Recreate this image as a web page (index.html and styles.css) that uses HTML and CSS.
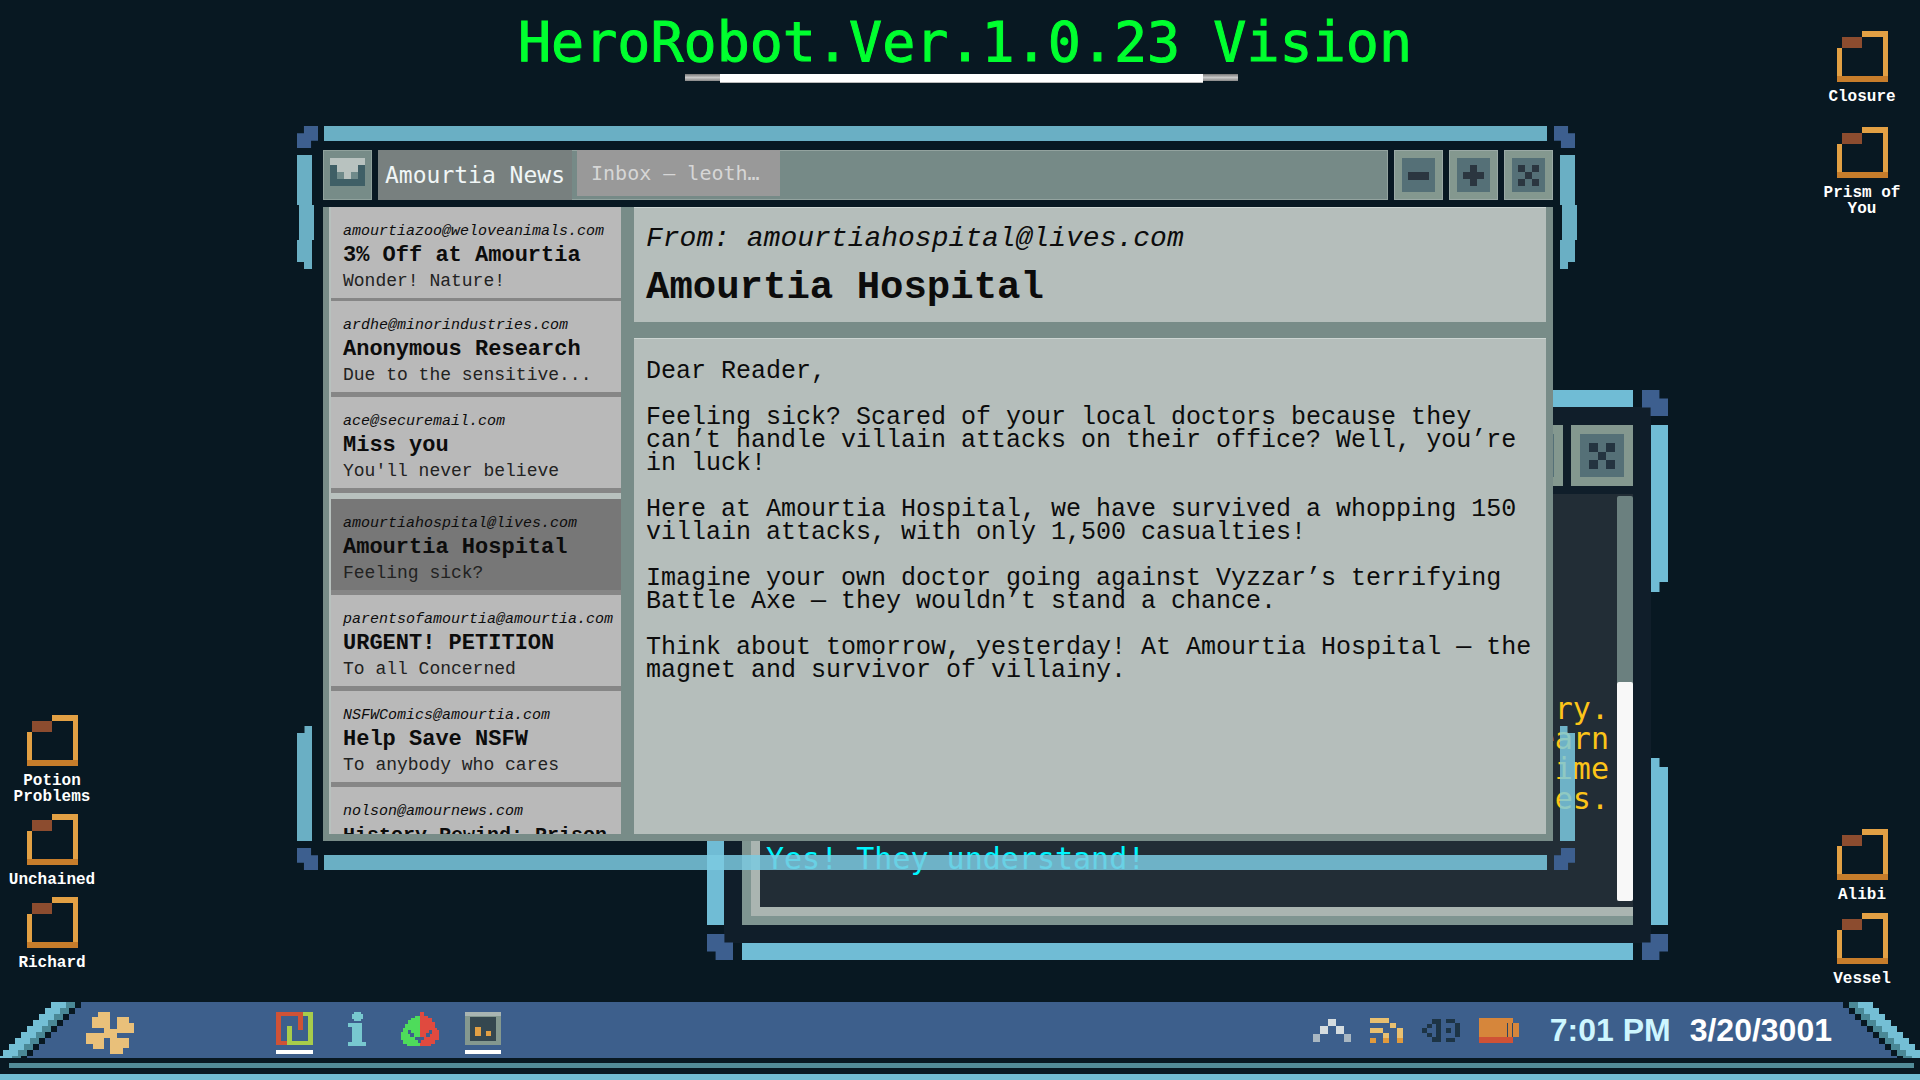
FILE: index.html
```html
<!DOCTYPE html>
<html lang="en">
<head>
  <meta charset="UTF-8" />
  <meta name="viewport" content="width=device-width, initial-scale=1.0"/>
  <title>HeroRobot Desktop</title>
  <link rel="stylesheet" href="styles.css">
</head>
<body>

  <svg class="defs" aria-hidden="true">
    <symbol id="folder" viewBox="0 0 51 51">
      <path fill="#e2a044" d="M25 0h26v51h-5V6H25zM0 17h5v34H0z"/>
      <path fill="#c77d2b" d="M0 45h51v6H0z"/>
      <path fill="#8c4c2f" d="M5 6h20v11H5z"/>
    </symbol>
    <symbol id="edge" viewBox="0 0 84 56">
      <path fill="#3d5f8c" d="M84 0v56H27v-2h6v-6h6v-6h6v-6h6v-6h6v-6h6v-6h6v-6h6v-6h6V0z"/>
      <path fill="#4a8896" d="M66 0h9v6h-6v6h-6v6h-6v6h-6v6h-6v6h-6v6h-6v6h-6v6h-6v2H12v-2h6v-6h6v-6h6v-6h6v-6h6v-6h6v-6h6v-6h6v-6h6z"/>
      <path fill="#74bfd5" d="M51 0h15v6h-6v6h-6v6h-6v6h-6v6h-6v6h-6v6h-6v6h-6v6h-6v2H-3v-2h6v-6h6v-6h6v-6h6v-6h6v-6h6v-6h6v-6h6v-6h6z"/>
    </symbol>
  </svg>

  <main class="desktop">
    <nav class="shortcuts left" aria-label="Shortcuts">
      <div class="group">
        <a class="shortcut" href="#"><svg><use href="#folder"/></svg>Potion Problems</a>
        <a class="shortcut" href="#"><svg><use href="#folder"/></svg>Unchained</a>
        <a class="shortcut" href="#"><svg><use href="#folder"/></svg>Richard</a>
      </div>
    </nav>

    <header>
      <h1>HeroRobot.Ver.1.0.23 Vision</h1>
      <div class="underline"></div>
    </header>

    <nav class="shortcuts right" aria-label="More shortcuts">
      <div class="group top">
        <a class="shortcut" href="#"><svg><use href="#folder"/></svg>Closure</a>
        <a class="shortcut" href="#"><svg><use href="#folder"/></svg>Prism of You</a>
      </div>
      <div class="group">
        <a class="shortcut" href="#"><svg><use href="#folder"/></svg>Alibi</a>
        <a class="shortcut" href="#"><svg><use href="#folder"/></svg>Vessel</a>
      </div>
    </nav>

    <section class="window chat" aria-label="Chat">
      <i class="corner up"></i><i class="bar"></i><i class="corner down end"></i>
      <div class="sides"><i class="side top"></i><i class="side bottom"></i></div>
      <div class="inner">
        <div class="titlebar">
          <button aria-label="Maximize"><svg viewBox="0 0 21 21"><path d="M7 0h7v7h7v7h-7v7H7v-7H0V7h7z"/></svg></button>
          <button aria-label="Close chat"><svg viewBox="0 0 21 21"><path d="M0 0h7v7H0zM14 0h7v7h-7zM7 7h7v7H7zM0 14h7v7H0zM14 14h7v7h-7z"/></svg></button>
        </div>
        <div class="log">
          <div class="messages">
            <p class="them">ary.<br>earn<br>time<br>ces.</p>
            <p class="me">Yes! They understand!</p>
          </div>
          <div class="scrollbar"><div class="thumb"></div></div>
        </div>
      </div>
      <div class="sides end"><i class="side top"></i><i class="side bottom"></i></div>
      <i class="corner down low"></i><i class="bar low"></i><i class="corner up end low"></i>
    </section>

    <section class="window mail" aria-label="Mail">
      <i class="corner up"></i><i class="bar"></i><i class="corner down end"></i>
      <div class="sides"><i class="side top"></i><i class="side bottom"></i></div>
      <div class="inner">
        <div class="titlebar">
          <div class="app-icon">
            <svg viewBox="0 0 35 28">
              <path fill="#3f5f66" d="M0 7h35v21H0z"/>
              <path fill="#6f8a8a" d="M7 14h21v7H7z"/>
              <path fill="#b8c2bf" d="M0 0h35v7h-7v7h-7v7h-7v-7H7V7H0z"/>
            </svg>
          </div>
          <div class="tabs">
            <button class="tab active">Amourtia News</button>
            <button class="tab">Inbox – leoth…</button>
          </div>
          <button class="control" aria-label="Minimize"><svg viewBox="0 0 21 21"><path d="M0 7h21v8H0z"/></svg></button>
          <button class="control" aria-label="Maximize mail"><svg viewBox="0 0 21 21"><path d="M7 0h7v7h7v7h-7v7H7v-7H0V7h7z"/></svg></button>
          <button class="control" aria-label="Close"><svg viewBox="0 0 21 21"><path d="M0 0h7v7H0zM14 0h7v7h-7zM7 7h7v7H7zM0 14h7v7H0zM14 14h7v7h-7z"/></svg></button>
        </div>

        <div class="mail-body">
          <div class="mail-list">
            <a class="mail-item" href="#"><em>amourtiazoo@weloveanimals.com</em><strong>3% Off at Amourtia</strong><span>Wonder! Nature!</span></a>
            <a class="mail-item" href="#"><em>ardhe@minorindustries.com</em><strong>Anonymous Research</strong><span>Due to the sensitive...</span></a>
            <a class="mail-item" href="#"><em>ace@securemail.com</em><strong>Miss you</strong><span>You'll never believe</span></a>
            <a class="mail-item selected" href="#"><em>amourtiahospital@lives.com</em><strong>Amourtia Hospital</strong><span>Feeling sick?</span></a>
            <a class="mail-item" href="#"><em>parentsofamourtia@amourtia.com</em><strong>URGENT! PETITION</strong><span>To all Concerned</span></a>
            <a class="mail-item" href="#"><em>NSFWComics@amourtia.com</em><strong>Help Save NSFW</strong><span>To anybody who cares</span></a>
            <a class="mail-item" href="#"><em>nolson@amournews.com</em><strong class="long">History Rewind: Prison</strong></a>
          </div>

          <article class="mail-detail">
            <div class="mail-header">
              <p>From: amourtiahospital@lives.com</p>
              <h2>Amourtia Hospital</h2>
            </div>
            <div class="mail-text">
              <p>Dear Reader,</p>
              <p>Feeling sick? Scared of your local doctors because they can’t handle villain attacks on their office? Well, you’re in luck!</p>
              <p>Here at Amourtia Hospital, we have survived a whopping 150 villain attacks, with only 1,500 casualties!</p>
              <p>Imagine your own doctor going against Vyzzar’s terrifying Battle Axe — they wouldn’t stand a chance.</p>
              <p>Think about tomorrow, yesterday! At Amourtia Hospital — the magnet and survivor of villainy.</p>
            </div>
          </article>
        </div>
      </div>
      <div class="sides end"><i class="side top"></i><i class="side bottom"></i></div>
      <i class="corner down low"></i><i class="bar low"></i><i class="corner up end low"></i>
    </section>
  </main>

  <footer class="taskbar">
    <div class="dock">
      <svg class="edge" viewBox="0 0 84 56"><use href="#edge"/></svg>
      <div class="dock-items">
        <button class="start" aria-label="Start">
          <svg width="48" height="42" viewBox="0 0 48 42"><path fill="#e9c07a" d="M12 0h12v17h7V5h12v6h5v10H31v5h12v10h-6v6H24V26h-6v11H7v-5H0V21h18v-5H6V5h6z"/></svg>
        </button>
        <div class="apps">
          <button class="open" aria-label="Maze">
            <svg width="37" height="33" viewBox="0 0 37 33"><path fill="#cf5236" d="M0 0h27v18h-5V4H5v25h6v4H0z"/><path fill="#a8cc4b" d="M27 0h10v33H11V14h5v15h16V4h-5z"/></svg>
          </button>
          <button aria-label="Info">
            <svg width="18" height="34" viewBox="0 0 18 34"><path fill="#78c8cf" d="M6 0h7v2h2v5h-2v2H6V7H4V2h2zM0 11h14v19h4v4H0v-4h4V15H0z"/></svg>
          </button>
          <button aria-label="Apple">
            <svg width="38" height="34" viewBox="0 0 38 34"><path fill="#4edc5b" d="M19 4h-5v2h-4v2H7v4H4v4H2v4H0v8h2v4h4v2h13z"/><path fill="#e04a3f" d="M19 0h4v4h4v2h4v4h3v6h2v2h2v10h-4v4h-4v2H19z"/><path fill="#3d5f8c" d="M7 18h3v3h3v4H9v-3H7zM31 18h-3v3h-3v4h4v-3h2zM14 25h9v3h-3v3h-3v-3h-3z"/></svg>
          </button>
          <button class="open" aria-label="Monitor">
            <svg width="36" height="33" viewBox="0 0 36 33"><path fill="#84988f" d="M0 0h36v33H0z"/><path fill="#a9b5b2" d="M0 0h36v4H0z"/><path fill="#35474f" d="M5 5h26v24H5z"/><path fill="#e2a044" d="M10 15h6v9h-6zM21 19h5v5h-5z"/></svg>
          </button>
        </div>
        <div class="tray">
          <svg width="38" height="23" viewBox="0 0 38 23"><path fill="#d5dcdf" d="M15 0h8v7h-8zM7 7h8v8H7zM23 7h8v8h-8z"/><path fill="#a9b7c2" d="M0 15h7v8H0zM31 15h7v8h-7z"/></svg>
          <svg width="33" height="25" viewBox="0 0 33 25"><path fill="#e9c070" d="M0 0h19v5h7v5h7v10h-6V10h-7V5H0zM0 10h13v5h6v5h-6v-5H0z"/><path fill="#e09a3c" d="M0 20h6v5H0zM13 20h6v5h-6zM27 20h6v5h-6z"/></svg>
          <svg width="38" height="24" viewBox="0 0 38 24"><path fill="#1d3445" d="M10 1h9v23h-9v-5h4V6h-4zM5 6h5v4H5zM0 10h5v5H0zM5 15h5v4H5zM24 10h5v5h-5zM24 1h9v4h5v14h-5v5h-9v-4h9V5h-9z"/></svg>
          <svg width="40" height="25" viewBox="0 0 40 25"><path fill="#d6863b" d="M0 0h34v5h6v14H0z"/><path fill="#cf5236" d="M0 19h34v6H0z"/><path fill="#2d4560" d="M28 5h1v14h-1zM33 5h1v14h-1z"/></svg>
          <time class="clock">7:01 PM</time>
          <time class="date" datetime="3001-03-20">3/20/3001</time>
        </div>
      </div>
      <svg class="edge flip" viewBox="4 0 80 56"><use href="#edge" width="84" height="56"/></svg>
    </div>
    <div class="shelf"></div>
    <div class="ledge"></div>
  </footer>

</body>
</html>
```

FILE: styles.css
```css
* {
  box-sizing: border-box;
}

body {
  margin: 0;
  height: 100vh;
  display: flex;
  flex-direction: column;
  overflow: hidden;
  background: #081822;
  color: #0c0c0c;
  font-family: "Liberation Mono", monospace;
}

h1, h2, p {
  margin: 0;
}

a {
  color: inherit;
  text-decoration: none;
}

button {
  border: none;
  padding: 0;
  background: none;
  font: inherit;
  color: inherit;
  cursor: pointer;
}

svg {
  display: block;
  shape-rendering: crispEdges;
}

.defs {
  position: absolute;
  width: 0;
  height: 0;
}

/* desktop */
.desktop {
  flex: 1;
  min-height: 0;
  position: relative;
  display: grid;
  grid-template-columns: 100px 1fr 100px;
  padding: 0 8px 0 2px;
}

header {
  padding: 10px 0 0 8px;
  text-align: center;
}

h1 {
  padding-left: 8px;
  font: 55px/64px "DejaVu Sans Mono", monospace;
  color: #00ff2f;
  -webkit-text-stroke: 1px #00ff2f;
  white-space: nowrap;
}

.underline {
  width: 553px;
  height: 7px;
  margin: 0 auto;
  background: linear-gradient(#777, #c8c8c8 50%, #888);
}

.underline::after {
  content: "";
  display: block;
  height: 8px;
  margin: 0 35px;
  background: #fff;
  border-bottom: 1px solid #bbb;
}

.shortcuts {
  display: flex;
  flex-direction: column;
  justify-content: space-between;
}

.shortcuts.left {
  justify-content: flex-end;
  padding-bottom: 31px;
}

.shortcuts.right {
  padding: 31px 0 15px;
}

.group {
  display: flex;
  flex-direction: column;
  gap: 10px;
}

.left .group {
  gap: 9px;
}

.group.top {
  gap: 22px;
}

.shortcut {
  display: flex;
  flex-direction: column;
  align-items: center;
  gap: 7px;
  color: #fff;
  font-size: 16px;
  font-weight: bold;
  line-height: 16px;
  text-align: center;
}

.shortcut svg {
  width: 51px;
  height: 51px;
}

/* windows */
.window {
  position: absolute;
  display: grid;
}

.bar,
.side {
  background: #70bcd5;
}

.bar,
.side,
.corner {
  display: block;
}

.corner {
  background: #3d5f8f;
}

.corner.up {
  clip-path: polygon(33% 0, 100% 0, 100% 67%, 67% 67%, 67% 100%, 0 100%, 0 33%, 33% 33%);
}

.corner.down {
  clip-path: polygon(0 0, 67% 0, 67% 33%, 100% 33%, 100% 100%, 33% 100%, 33% 67%, 0 67%);
}

.end {
  justify-self: end;
}

.low {
  align-self: end;
}

.sides {
  display: flex;
  flex-direction: column;
  justify-content: space-between;
}

.inner {
  display: flex;
  flex-direction: column;
  min-width: 0;
  min-height: 0;
}

.titlebar {
  display: flex;
}

/* chat window */
.chat {
  top: 390px;
  right: 252px;
  bottom: 42px;
  left: 707px;
  grid-template: 35px 1fr 35px / 35px 1fr 35px;
}

.chat::before {
  content: "";
  position: absolute;
  inset: 17px;
  background: #101e2a;
}

.chat > * {
  position: relative;
}

.chat .corner {
  width: 26px;
  height: 26px;
}

.chat .bar {
  height: 17px;
}

.chat .side {
  width: 17px;
}

.chat .side.top {
  height: 167px;
  clip-path: polygon(0 0, 100% 0, 100% 157px, 50% 157px, 50% 100%, 0 100%);
}

.chat .side.bottom {
  height: 167px;
  clip-path: polygon(0 0, 50% 0, 50% 9px, 100% 9px, 100% 100%, 0 100%);
}

.chat .inner {
  gap: 8px;
}

.chat .titlebar {
  justify-content: flex-end;
  gap: 8px;
}

.chat .titlebar button {
  width: 62px;
  height: 61px;
  padding: 9px;
  background: #557077;
  border: 9px solid #84988f;
  fill: #243440;
}

.log {
  flex: 1;
  display: flex;
  background: #222d36;
  border: solid #7f9591;
  border-width: 0 0 9px 9px;
  box-shadow: inset 9px -9px 0 #aab5b1;
}

.messages {
  flex: 1;
  display: flex;
  flex-direction: column;
  justify-content: flex-end;
  gap: 30px;
  padding: 0 8px 42px 15px;
  font: 30px/30px "DejaVu Sans Mono", monospace;
}

.them {
  color: #fcc419;
  text-align: right;
}

.me {
  color: #00f6ff;
}

.scrollbar {
  width: 16px;
  margin: 2px 0 15px;
  background: #6b807f;
  border-radius: 2px;
  display: flex;
  align-items: flex-end;
}

.thumb {
  width: 100%;
  height: 54%;
  background: #f8f8f8;
  border-radius: 2px;
}

/* mail window */
.mail {
  top: 126px;
  right: 345px;
  bottom: 132px;
  left: 297px;
  grid-template: 24px 1fr 29px / 26px 1fr 22px;
}

.mail .corner {
  width: 21px;
  height: 22px;
}

.mail .bar {
  height: 15px;
  margin: 0 6px 0 1px;
}

.mail .bar,
.mail .side {
  background: rgba(123, 202, 225, 0.85);
}

.mail .side {
  width: 15px;
}

.mail .sides {
  padding-top: 5px;
}

.mail .side.top {
  width: 17px;
  height: 114px;
  clip-path: polygon(0 0, 15px 0, 15px 50px, 17px 50px, 17px 85px, 15px 85px, 15px 114px, 7px 114px, 7px 107px, 0 107px, 0 85px, 2px 85px, 2px 50px, 0 50px);
}

.mail .sides.end {
  width: 15px;
}

.mail .end .side.top {
  clip-path: polygon(0 0, 15px 0, 15px 50px, 17px 50px, 17px 85px, 15px 85px, 15px 107px, 8px 107px, 8px 114px, 0 114px, 0 85px, 2px 85px, 2px 50px, 0 50px);
}

.mail .side.bottom {
  height: 115px;
  clip-path: polygon(50% 0, 100% 0, 100% 100%, 0 100%, 0 7px, 50% 7px);
}

.mail .end .side.bottom {
  clip-path: polygon(0 0, 50% 0, 50% 7px, 100% 7px, 100% 100%, 0 100%);
}

.mail .inner {
  gap: 7px;
}

.mail .titlebar {
  gap: 6px;
  height: 50px;
}

.app-icon {
  width: 49px;
  padding: 7px 6px;
  background: #778c88;
  border: 1px solid #8fa19c;
}

.tabs {
  flex: 1;
  display: flex;
  align-items: flex-start;
  gap: 5px;
  background: #768a87;
  box-shadow: inset 0 0 0 1px #93a39f;
}

.tab {
  height: 46px;
  padding: 0 20px 0 14px;
  background: #999;
  color: #d6d6d6;
  font: 20px/32px "DejaVu Sans Mono", monospace;
}

.tab.active {
  height: 50px;
  padding: 0 7px;
  background: #78807f;
  color: #f0f6f6;
  font-size: 23px;
}

.control {
  width: 49px;
  padding: 7px 6px;
  background: #557077;
  border: 8px solid #84988f;
  outline: 1px solid #9aa9a5;
  outline-offset: -1px;
  fill: #2b3640;
}

.mail-body {
  flex: 1;
  min-height: 0;
  display: flex;
  gap: 13px;
  padding: 0 7px 7px 6px;
  background: #788c88;
}

.mail-list {
  flex: 0 0 292px;
  padding-left: 2px;
  background: #b8c1be;
  overflow: hidden;
}

.mail-item {
  display: block;
  padding: 15px 0 6px 12px;
  background: #b9b9b9;
  border-bottom: 5px solid #868686;
  white-space: nowrap;
}

.mail-item:first-child {
  border-bottom-width: 3px;
}

.mail-item.selected {
  margin-top: 6px;
  background: #777;
}

.mail-item em,
.mail-item strong,
.mail-item span {
  display: block;
}

.mail-item em {
  font-size: 15px;
  line-height: 20px;
}

.mail-item strong {
  font-size: 22px;
  line-height: 28px;
}

.mail-item strong.long {
  font-size: 20px;
}

.mail-item span {
  font-size: 18px;
  line-height: 22px;
  color: #222;
}

.mail-detail {
  flex: 1;
  display: flex;
  flex-direction: column;
  gap: 16px;
}

.mail-header,
.mail-text {
  background: #b5bebb;
  border-top: 1px solid #cdd5d2;
  padding-left: 12px;
}

.mail-header {
  padding-top: 13px;
  padding-bottom: 3px;
}

.mail-header p {
  font-size: 28px;
  font-style: italic;
  line-height: 36px;
}

.mail-header h2 {
  font-size: 39px;
  line-height: 62px;
}

.mail-text {
  flex: 1;
  padding-top: 21px;
  font-size: 25px;
  line-height: 23px;
}

.mail-text p {
  margin-bottom: 23px;
}

/* taskbar */
.dock {
  display: flex;
  height: 56px;
}

.edge {
  width: 84px;
  height: 56px;
}

.edge.flip {
  width: 80px;
  transform: scaleX(-1);
}

.dock-items {
  flex: 1;
  display: flex;
  background: #3d5f8c;
}

.start {
  align-self: flex-start;
  margin: 10px 142px 0 2px;
}

.apps {
  display: flex;
  align-items: flex-start;
  gap: 35px;
  padding-top: 10px;
}

.apps .open {
  padding-bottom: 5px;
  border-bottom: 4px solid #fff;
}

.apps .open:last-child {
  margin-left: -9px;
}

.tray {
  flex: 1;
  display: flex;
  justify-content: flex-end;
  align-items: center;
  gap: 19px;
  padding-right: 8px;
  color: #fff;
  font: bold 32px/56px "Liberation Sans", sans-serif;
}

.clock {
  color: #cdf6ff;
  margin-left: 12px;
}

.shelf {
  height: 5px;
  margin: 5px 6px 0 9px;
  background: #528c99;
}

.ledge {
  height: 6px;
  margin-top: 6px;
  background: #70bcd3;
}
```
